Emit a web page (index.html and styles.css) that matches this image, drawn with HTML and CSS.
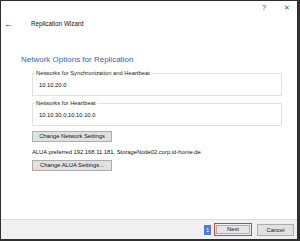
FILE: index.html
```
<!DOCTYPE html>
<html>
<head>
<meta charset="utf-8">
<link rel="stylesheet" href="styles.css">
</head>
<body>
<div class="window">
  <div class="caption">
    <span class="cap-btn">?</span>
    <span class="cap-btn close">✕</span>
  </div>
  <div class="header">
    <span class="back">←</span>
    <span class="title">Replication Wizard</span>
  </div>
  <h1 class="heading">Network Options for Replication</h1>
  <div class="content">
    <fieldset class="group first">
      <legend>Networks for Synchronization and Heartbeat</legend>
      <div class="value">10.10.20.0</div>
    </fieldset>
    <fieldset class="group">
      <legend>Networks for Heartbeat</legend>
      <div class="value">10.10.30.0,10.10.10.0</div>
    </fieldset>
    <div class="btn btn-change">Change Network Settings</div>
    <div class="info">ALUA preferred 192.168.11.181, StorageNode02.corp.id-home.de</div>
    <div class="btn btn-alua">Change ALUA Settings...</div>
  </div>
  <div class="footer">
    <span class="badge">1</span>
    <span class="highlight"><span class="btn btn-next">Next</span></span>
    <span class="btn btn-cancel">Cancel</span>
  </div>
</div>
</body>
</html>
```
FILE: styles.css
```
html, body {
  margin: 0;
  padding: 0;
  background: #ffffff;
}
body {
  font-family: "Liberation Sans", Arial, sans-serif;
  color: #111;
}
.window {
  width: 300px;
  height: 241px;
  box-sizing: border-box;
  border-left: 1px solid #2e2e2e;
  border-top: 1px solid #2e2e2e;
  border-right: 3px solid #2e2e2e;
  border-bottom: 2px solid #2e2e2e;
  display: flex;
  flex-direction: column;
  background: #fff;
}
.caption {
  height: 13px;
  display: flex;
  justify-content: flex-end;
  align-items: center;
  padding-right: 5px;
  gap: 13px;
}
.cap-btn {
  width: 10px;
  text-align: center;
  font-size: 7px;
  line-height: 10px;
  color: #444;
}
.cap-btn.close {
  font-size: 6.5px;
  color: #555;
}
.header {
  margin-top: 4px;
  height: 12px;
  display: flex;
  align-items: center;
}
.back {
  margin-left: 3px;
  width: 8px;
  font-size: 9px;
  line-height: 12px;
  color: #444;
}
.title {
  margin-left: 19px;
  font-size: 6.3px;
  line-height: 12px;
  color: #111;
}
.heading {
  margin: 25px 0 0 20px;
  font-size: 8px;
  line-height: 10px;
  font-weight: normal;
  color: #3566b3;
}
.content {
  padding: 0 15px 0 31px;
  display: flex;
  flex-direction: column;
  align-items: flex-start;
  font-size: 5.8px;
}
.group {
  align-self: stretch;
  margin: 4px 0 0 0;
  padding: 0 0 6px 2px;
  border: 1px solid #e2e2e2;
  min-width: 0;
}
.group.first {
  margin-top: 5px;
}
.group legend {
  padding: 0 1px;
  line-height: 6px;
  font-size: 5.8px;
  color: #222;
}
.value {
  margin: 5px 0 0 4px;
  line-height: 8px;
  color: #111;
}
.btn {
  box-sizing: border-box;
  height: 11px;
  background: #e1e1e1;
  border: 1px solid #adadad;
  font-size: 5.8px;
  line-height: 9px;
  text-align: center;
  color: #111;
}
.btn-change {
  margin-top: 5px;
  width: 80px;
}
.info {
  margin-top: 6px;
  line-height: 8px;
  color: #111;
}
.btn-alua {
  margin-top: 4px;
  width: 80px;
}
.footer {
  margin-top: auto;
  height: 20px;
  box-sizing: border-box;
  border-top: 1px solid #dcdcdc;
  background: #f0f0f0;
  display: flex;
  justify-content: flex-end;
  align-items: center;
  padding-right: 3px;
}
.badge {
  width: 7px;
  height: 10px;
  background: #4a7fd4;
  color: #fff;
  font-size: 5.8px;
  line-height: 10px;
  text-align: center;
}
.highlight {
  margin-left: 3px;
  width: 38px;
  height: 13px;
  box-sizing: border-box;
  border: 1px solid #e23b3b;
  padding: 1px;
  display: flex;
}
.btn-next {
  flex: 1;
  height: 9px;
  line-height: 7px;
  background: #e5e5e5;
}
.btn-cancel {
  margin-left: 5px;
  width: 37px;
  height: 12px;
  line-height: 10px;
}
```
